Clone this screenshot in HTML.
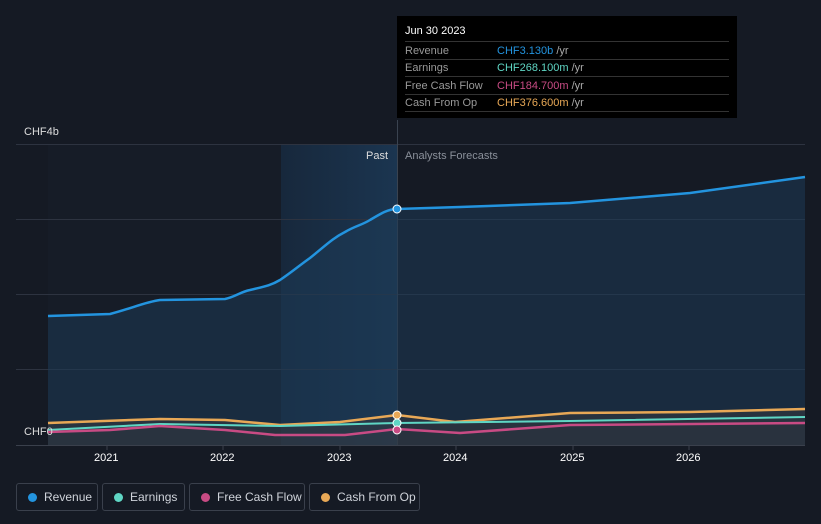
<!DOCTYPE html>
<html><head><style>
body{margin:0;width:821px;height:524px;background:#151a24;font-family:"Liberation Sans",sans-serif;overflow:hidden;position:relative}
.t{position:absolute;font-size:11px;color:#fff}
.leg{position:absolute;top:483px;height:28px;border:1px solid #3a404c;border-radius:3px;box-sizing:border-box;color:#cfd3da;font-size:12px;line-height:26px;padding-left:27px}
.leg i{position:absolute;left:11px;top:9px;width:9px;height:9px;border-radius:50%}
</style></head><body>
<svg width="821" height="524" style="position:absolute;left:0;top:0">
<defs>
<linearGradient id="p" x1="0" x2="1"><stop offset="0" stop-color="#151a24"/><stop offset="1" stop-color="#1a2535"/></linearGradient>
<linearGradient id="h" x1="0" x2="1"><stop offset="0" stop-color="#17283c"/><stop offset="1" stop-color="#1b3550"/></linearGradient>
</defs>
<rect x="48" y="145" width="233" height="300" fill="#161c27"/>
<rect x="281" y="145" width="116" height="300" fill="url(#h)"/>
<g stroke="#2d3340" stroke-width="1">
<line x1="16" y1="144.5" x2="805" y2="144.5"/><line x1="16" y1="219.5" x2="805" y2="219.5"/><line x1="16" y1="294.5" x2="805" y2="294.5"/><line x1="16" y1="369.5" x2="805" y2="369.5"/>
</g>
<line x1="16" y1="445.5" x2="805" y2="445.5" stroke="#3a404c"/>
<line x1="397.5" y1="120" x2="397.5" y2="445" stroke="#3a4350"/>
<path d="M48,316 L110,314 C130,309 145,302 160,300 L225,299 C235,297 240,292 250,290 C262,287 270,286 280,280 C292,272 300,265 310,258 C325,246 333,238 345,232 C355,226 362,225 370,220 C380,214 388,209 397,209 L460,207 L570,203 L690,193 L805,177 L805,445 L48,445Z" fill="#1e3a55" opacity="0.55"/>
<path d="M48,316 L110,314 C130,309 145,302 160,300 L225,299 C235,297 240,292 250,290 C262,287 270,286 280,280 C292,272 300,265 310,258 C325,246 333,238 345,232 C355,226 362,225 370,220 C380,214 388,209 397,209 L460,207 L570,203 L690,193 L805,177" fill="none" stroke="#2394df" stroke-width="2.5"/>
<path d="M48,423 L160,419 L225,420 L280,425 L340,422 L397,415 L455,422 L570,413 L690,412 L805,409 L805,445 L48,445Z" fill="#3a3a3e" opacity="0.5"/>
<path d="M48,423 L160,419 L225,420 L280,425 L340,422 L397,415 L455,422 L570,413 L690,412 L805,409" fill="none" stroke="#e8a856" stroke-width="2.5"/>
<path d="M48,430 L160,424 L280,426 L397,423 L570,421 L805,417" fill="none" stroke="#5fd6c4" stroke-width="2"/>
<path d="M48,432 L110,430 L160,426 L225,430 L275,435 L345,435 L397,429 L460,433 L570,425 L805,423" fill="none" stroke="#c84b84" stroke-width="2.5"/>
<g stroke="#fff" stroke-width="1">
<circle cx="397" cy="209" r="4" fill="#2394df"/><circle cx="397" cy="415" r="4" fill="#e8a856"/><circle cx="397" cy="423" r="4" fill="#5fd6c4"/><circle cx="397" cy="430" r="4" fill="#c84b84"/>
</g>
<g stroke="#3a404c"><line x1="107" y1="445" x2="107" y2="450"/><line x1="223" y1="445" x2="223" y2="450"/><line x1="340" y1="445" x2="340" y2="450"/><line x1="456" y1="445" x2="456" y2="450"/><line x1="573" y1="445" x2="573" y2="450"/><line x1="689" y1="445" x2="689" y2="450"/></g>
</svg>
<div class="t" style="left:24px;top:126px;color:#ddd">CHF4b</div>
<div class="t" style="left:24px;top:426px;color:#ddd">CHF0</div>
<div class="t" style="left:366px;top:150px;color:#ddd">Past</div>
<div class="t" style="left:405px;top:150px;color:#8a909a">Analysts Forecasts</div>
<div class="t" style="left:94px;top:452px">2021</div><div class="t" style="left:210px;top:452px">2022</div><div class="t" style="left:327px;top:452px">2023</div><div class="t" style="left:443px;top:452px">2024</div><div class="t" style="left:560px;top:452px">2025</div><div class="t" style="left:676px;top:452px">2026</div>
<div style="position:absolute;left:397px;top:16px;width:340px;height:102px;background:#000;font-size:11px">
<div style="position:absolute;left:8px;top:9px;color:#fff">Jun 30 2023</div>
<div style="position:absolute;left:8px;top:25px;width:324px;border-top:1px solid #333"></div>
<div style="position:absolute;left:8px;top:27px;color:#999;line-height:17.3px">Revenue<br>Earnings<br>Free Cash Flow<br>Cash From Op</div>
<div style="position:absolute;left:100px;top:27px;line-height:17.3px;color:#aaa"><span style="color:#2394df">CHF3.130b</span> /yr<br><span style="color:#5fd6c4">CHF268.100m</span> /yr<br><span style="color:#c84b84">CHF184.700m</span> /yr<br><span style="color:#e8a856">CHF376.600m</span> /yr</div>
<div style="position:absolute;left:8px;top:43px;width:324px;border-top:1px solid #333"></div>
<div style="position:absolute;left:8px;top:60px;width:324px;border-top:1px solid #333"></div>
<div style="position:absolute;left:8px;top:78px;width:324px;border-top:1px solid #333"></div>
<div style="position:absolute;left:8px;top:95px;width:324px;border-top:1px solid #333"></div>
</div>
<div class="leg" style="left:16px;width:82px"><i style="background:#2394df"></i>Revenue</div>
<div class="leg" style="left:102px;width:83px"><i style="background:#5fd6c4"></i>Earnings</div>
<div class="leg" style="left:189px;width:116px"><i style="background:#c84b84"></i>Free Cash Flow</div>
<div class="leg" style="left:309px;width:111px"><i style="background:#e8a856"></i>Cash From Op</div>
</body></html>
